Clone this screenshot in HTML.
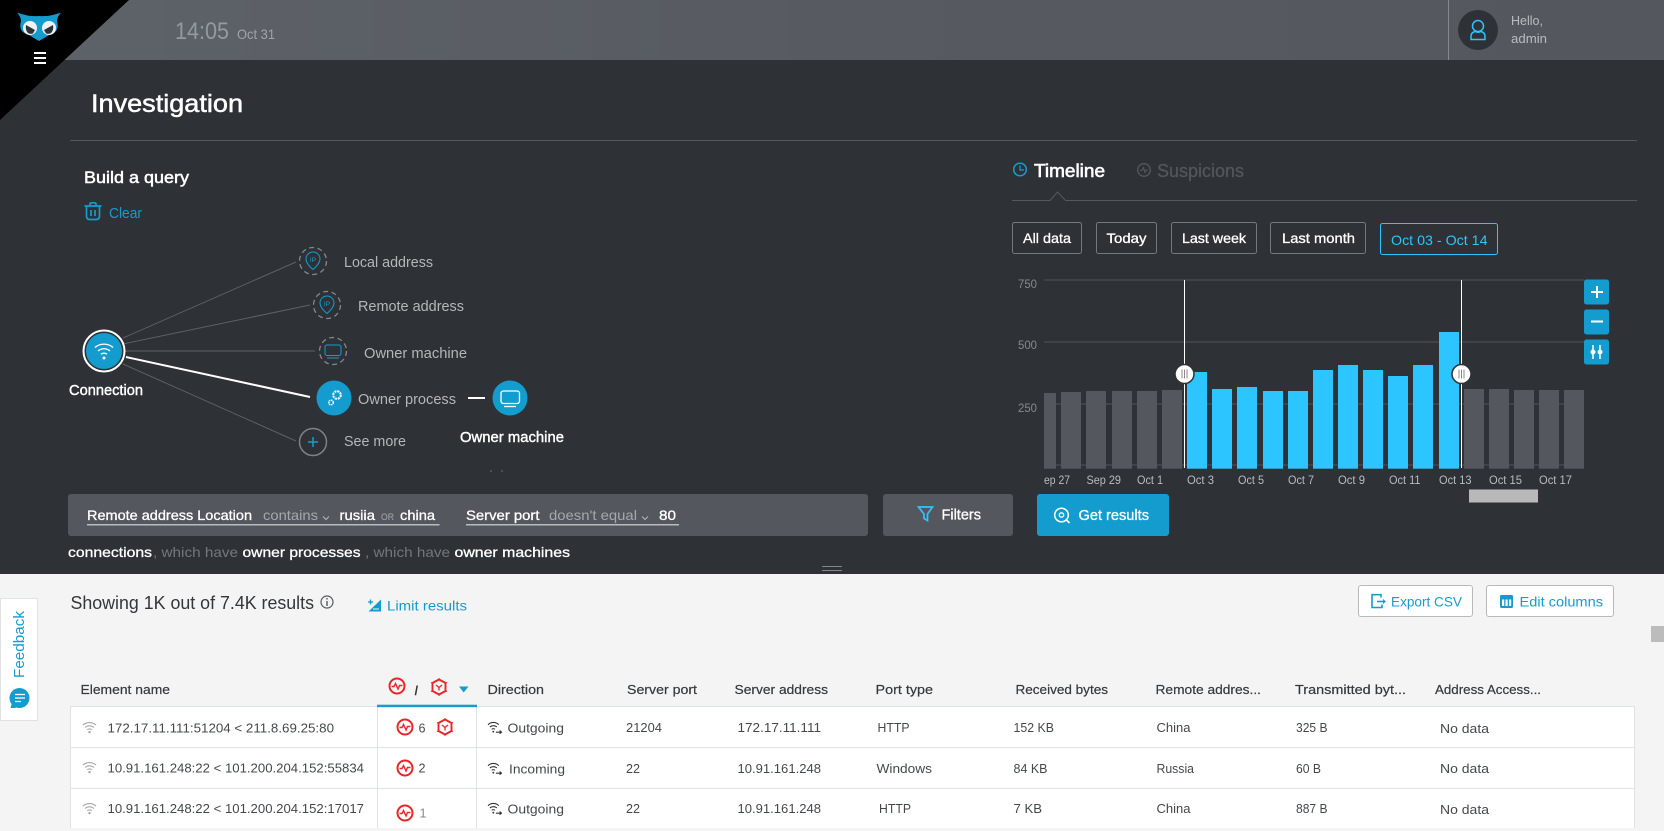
<!DOCTYPE html>
<html><head><meta charset="utf-8"><title>Investigation</title>
<style>
html,body{margin:0;padding:0;width:1664px;height:831px;overflow:hidden;background:#f4f4f4}
svg{display:block}
text{font-family:"Liberation Sans",sans-serif;white-space:pre}
.n{font-size:15px;fill:#b4b6b8}
.w{font-size:15px;fill:#fff;stroke:#fff;stroke-width:.4px}
.b{font-size:14px;fill:#fff;stroke:#fff;stroke-width:.3px}
.g{font-size:14px;fill:#8d9094}
.x{font-size:12px;fill:#b9bbbd}
.y{font-size:12px;fill:#85888c}
.h{font-size:13px;fill:#36393c;stroke:#36393c;stroke-width:.2px}
.r{font-size:13px;fill:#45484b}
.gb{fill:#54585e}
.bb{fill:#2cc5ff}
.gl{fill:#3f4347}
</style></head><body>
<svg xmlns="http://www.w3.org/2000/svg" width="1664" height="831" viewBox="0 0 1664 831">
<defs>
<linearGradient id="hd" x1="0" x2="1" y1="0" y2="0"><stop offset="0" stop-color="#5e6369"/><stop offset=".5" stop-color="#575b61"/><stop offset="1" stop-color="#54585e"/></linearGradient>
<symbol id="pulse" viewBox="0 0 18 18" overflow="visible"><circle cx="9" cy="9" r="7.500" fill="none" stroke="#e8262a" stroke-width="2"/><path d="M3.500 9.500H6L7.500 6.500 10 12 11.500 8.500H14.500" fill="none" stroke="#e8262a" stroke-width="1.400"/></symbol>
<symbol id="hex" viewBox="0 0 18 18" overflow="visible"><path d="M9 1.500L15.500 5V13L9 16.500 2.500 13V5Z" fill="none" stroke="#e8262a" stroke-width="1.900"/><path d="M6 7L9 9.500 12 7M9 9.500V12.500" fill="none" stroke="#e8262a" stroke-width="1.300"/><path d="M9 0V2M9 16V18M1 4.500L3 5.500M17 4.500L15 5.500M1 13.500L3 12.500M17 13.500L15 12.500" stroke="#e8262a" stroke-width="1"/></symbol>
<symbol id="wifi" viewBox="0 0 16 14" overflow="visible"><g fill="none" stroke="#a5a7a9" stroke-width="1.200"><path d="M1 4.500C4.500 .8 11.500 .8 15 4.500"/><path d="M3.300 7C5.800 4.500 10.200 4.500 12.700 7"/><path d="M5.500 9.400C6.900 8.200 9.100 8.200 10.500 9.400"/></g><circle cx="8" cy="12" r="1.300" fill="#a5a7a9"/></symbol>
<symbol id="dir" viewBox="0 0 16 14" overflow="visible"><g fill="none" stroke="#333" stroke-width="1.200"><path d="M.5 4C3.500 .8 9 .8 12 4"/><path d="M2.500 6.500C4.500 4.500 8 4.500 10 6.500"/><path d="M4.500 9C5.500 8 7 8 8 9"/></g><circle cx="6.200" cy="11.500" r="1" fill="#333"/><path d="M9 12H14.500M13 10.300L15 12 13 13.700" fill="none" stroke="#333" stroke-width="1.200"/></symbol>
</defs>

<rect x="0" y="0" width="1664" height="574" fill="#2e3236"/>
<rect x="0" y="0" width="1664" height="60" fill="url(#hd)"/>
<polygon points="0,0 129,0 0,120" fill="#000"/>
<!-- owl -->
<path d="M17 12.500Q29 17 39 16Q49 17 61 12.500Q57 17 57 21Q60 32 50 34.500L39 41 28 34.500Q18 32 21 21Q21 17 17 12.500Z" fill="#159ccf"/>
<ellipse cx="30" cy="28" rx="7" ry="7" fill="#eef2f4"/><ellipse cx="49" cy="28" rx="7" ry="7" fill="#eef2f4"/>
<path d="M26 25L35 30 33 33.500Q30 34.500 28 33 25 30 26 25Z" fill="#2e3236"/><path d="M53 25L44 30 46 33.500Q49 34.500 51 33 54 30 53 25Z" fill="#2e3236"/>
<path d="M34 53H46M34 58H46M34 63H46" stroke="#fff" stroke-width="2"/>
<!-- header -->
<text x="175" y="39" font-size="24" fill="#929aa0" textLength="54" lengthAdjust="spacingAndGlyphs">14:05</text>
<text x="237" y="39" font-size="14" fill="#9ea5aa" textLength="38" lengthAdjust="spacingAndGlyphs">Oct 31</text>
<rect x="1448" y="0" width="1" height="60" fill="#85888d"/>
<circle cx="1478" cy="30" r="20" fill="#2e3236"/>
<circle cx="1478" cy="26" r="5.500" fill="none" stroke="#2cc5ff" stroke-width="1.500"/>
<path d="M1471 39.500V36.500Q1471 32.500 1475 31.500Q1478 33 1481 31.500Q1485 32.500 1485 36.500V39.500Z" fill="none" stroke="#2cc5ff" stroke-width="1.500"/>
<text x="1511" y="25" font-size="13" fill="#b9bcbe" textLength="32" lengthAdjust="spacingAndGlyphs">Hello,</text>
<text x="1511" y="43" font-size="13" fill="#b9bcbe" textLength="36" lengthAdjust="spacingAndGlyphs">admin</text>

<text x="91" y="112" font-size="25" fill="#fff" stroke="#fff" stroke-width=".5" textLength="152" lengthAdjust="spacingAndGlyphs">Investigation</text>
<rect x="70" y="140" width="1567" height="1" fill="#55595e"/>

<!-- query -->
<text x="84" y="183" font-size="17" fill="#fff" stroke="#fff" stroke-width=".5" textLength="105" lengthAdjust="spacingAndGlyphs">Build a query</text>
<g fill="none" stroke="#159ccf" stroke-width="1.700"><path d="M84.500 206H101.500M90 206V204Q90 202.800 91.500 202.800H94.500Q96 202.800 96 204V206M86.500 206V216Q86.500 219.500 90 219.500H96Q99.500 219.500 99.500 216V206"/><path d="M91 210V216M95 210V216"/></g>
<text x="109" y="218" font-size="15" fill="#159ccf" textLength="33" lengthAdjust="spacingAndGlyphs">Clear</text>

<!-- graph -->
<g stroke="#5d6064" stroke-width="1"><path d="M123 338L296 262"/><path d="M123 344L310 305"/><path d="M125 351H315"/><path d="M123 364L296 441"/></g>
<path d="M126 357L310 397" stroke="#fff" stroke-width="2"/>
<circle cx="104" cy="351" r="20.500" fill="#2e3236" stroke="#fff" stroke-width="2"/>
<circle cx="104" cy="351" r="18" fill="#159ccf"/>
<g fill="none" stroke="#fff" stroke-width="1.300"><path d="M95 347.500C100 343 108 343 113 347.500"/><path d="M98 351C101.500 348 106.500 348 110 351"/><path d="M101 354.200C102.800 353 105.200 353 107 354.200"/></g><circle cx="104" cy="358" r="1.500" fill="#fff"/>
<text x="69" y="395" class="w" textLength="74" lengthAdjust="spacingAndGlyphs">Connection</text>

<g fill="none" stroke="#85888b" stroke-width="1.300" stroke-dasharray="5 3.500"><circle cx="313" cy="261" r="13.500"/><circle cx="327" cy="305" r="13.500"/><circle cx="333" cy="351" r="13.500"/></g>
<g fill="none" stroke="#159ccf" stroke-width="1"><path d="M313 269.500Q306 263.500 306 259A7 7 0 0 1 320 259Q320 263.500 313 269.500Z"/><path d="M327 313.500Q320 307.500 320 303A7 7 0 0 1 334 303Q334 307.500 327 313.500Z"/><rect x="325" y="345" width="16" height="10.500" rx="2"/><path d="M327 358H339"/></g>
<text x="313" y="262" font-size="6.500" fill="#159ccf" text-anchor="middle">IP</text>
<text x="327" y="306" font-size="6.500" fill="#159ccf" text-anchor="middle">IP</text>
<text x="344" y="267" class="n" textLength="89" lengthAdjust="spacingAndGlyphs">Local address</text>
<text x="358" y="311" class="n" textLength="106" lengthAdjust="spacingAndGlyphs">Remote address</text>
<text x="364" y="358" class="n" textLength="103" lengthAdjust="spacingAndGlyphs">Owner machine</text>
<circle cx="334" cy="398" r="17.500" fill="#159ccf"/>
<g fill="none" stroke="#fff"><circle cx="337" cy="395" r="3.800" stroke-dasharray="2.200 .8" stroke-width="2"/><circle cx="331" cy="402.500" r="2.300" stroke-dasharray="1.500 .6" stroke-width="1.500"/></g>
<text x="358" y="404" class="n" textLength="98" lengthAdjust="spacingAndGlyphs">Owner process</text>
<rect x="468" y="397" width="17" height="2" fill="#fff"/>
<circle cx="510" cy="398" r="17.500" fill="#159ccf"/>
<rect x="501" y="391" width="18.500" height="12.500" rx="2.500" fill="none" stroke="#fff" stroke-width="1.300"/><path d="M504 406.500H516" stroke="#fff" stroke-width="1.300"/>
<text x="460" y="442" class="w" textLength="104" lengthAdjust="spacingAndGlyphs">Owner machine</text>
<circle cx="313" cy="442" r="13.500" fill="none" stroke="#7f8285" stroke-width="1.500"/>
<path d="M308 442H318M313 437V447" stroke="#159ccf" stroke-width="1.500"/>
<text x="344" y="446" class="n" textLength="62" lengthAdjust="spacingAndGlyphs">See more</text>
<circle cx="491" cy="471" r=".6" fill="#999"/><circle cx="502" cy="471" r=".6" fill="#999"/>

<!-- query bar -->
<rect x="68" y="494" width="800" height="42" rx="3" fill="#54585e"/>
<text x="87" y="520" class="b" textLength="165" lengthAdjust="spacingAndGlyphs">Remote address Location</text>
<text x="263" y="520" class="g" textLength="55" lengthAdjust="spacingAndGlyphs" style="fill:#a5a8ab">contains</text>
<path d="M323 516.500L326 519.500 329 516.500" fill="none" stroke="#b5b7b9" stroke-width="1"/>
<text x="339.500" y="520" class="b" textLength="35.500" lengthAdjust="spacingAndGlyphs">rusiia</text>
<text x="381" y="520" font-size="9.500" fill="#a5a8ab" textLength="13" lengthAdjust="spacingAndGlyphs">OR</text>
<text x="400" y="520" class="b" textLength="35" lengthAdjust="spacingAndGlyphs">china</text>
<rect x="87" y="524" width="352.500" height="1.500" fill="#b9bbbd"/>
<text x="466" y="520" class="b" textLength="73.500" lengthAdjust="spacingAndGlyphs">Server port</text>
<text x="549" y="520" class="g" textLength="88" lengthAdjust="spacingAndGlyphs" style="fill:#a5a8ab">doesn't equal</text>
<path d="M642 516.500L645 519.500 648 516.500" fill="none" stroke="#b5b7b9" stroke-width="1"/>
<text x="659" y="520" class="b" textLength="17" lengthAdjust="spacingAndGlyphs">80</text>
<rect x="466" y="524" width="213" height="1.500" fill="#b9bbbd"/>
<text x="68" y="557" class="b" textLength="84" lengthAdjust="spacingAndGlyphs">connections</text>
<text x="153" y="557" class="g" style="fill:#74777b" textLength="85" lengthAdjust="spacingAndGlyphs">, which have</text>
<text x="242.500" y="557" class="b" textLength="118" lengthAdjust="spacingAndGlyphs">owner processes</text>
<text x="365" y="557" class="g" style="fill:#74777b" textLength="85" lengthAdjust="spacingAndGlyphs">, which have</text>
<text x="454.500" y="557" class="b" textLength="115.500" lengthAdjust="spacingAndGlyphs">owner machines</text>

<!-- filters/get -->
<rect x="883" y="494" width="130" height="42" rx="3" fill="#54585e"/>
<path d="M918.500 507H932.500L927.500 514V520.500L924 518.500V514Z" fill="none" stroke="#2cc5ff" stroke-width="1.700"/>
<text x="941.500" y="519.500" class="b" style="font-size:15px" textLength="39.500" lengthAdjust="spacingAndGlyphs">Filters</text>
<rect x="1037" y="494" width="132" height="42" rx="3" fill="#159ccf"/>
<circle cx="1061.500" cy="515" r="6.800" fill="none" stroke="#fff" stroke-width="1.500"/><circle cx="1061.500" cy="515" r="2.200" fill="none" stroke="#fff" stroke-width="1.300"/><path d="M1066.500 520L1069.500 523" stroke="#fff" stroke-width="1.600"/>
<text x="1078.500" y="520" class="b" style="font-size:15px" textLength="70.500" lengthAdjust="spacingAndGlyphs">Get results</text>

<!-- tabs -->
<circle cx="1020" cy="169.500" r="6.300" fill="none" stroke="#159ccf" stroke-width="1.500"/><path d="M1020 165.500V170H1024" fill="none" stroke="#159ccf" stroke-width="1.200"/>
<text x="1034" y="177" font-size="18" fill="#fff" stroke="#fff" stroke-width=".6" textLength="71" lengthAdjust="spacingAndGlyphs">Timeline</text>
<circle cx="1144" cy="170" r="6.300" fill="none" stroke="#565a5f" stroke-width="1.300"/><path d="M1140 170.500H1142L1143.500 167.500 1145 172.500 1146 170H1148" fill="none" stroke="#565a5f" stroke-width="1"/>
<text x="1157" y="177" font-size="18" fill="#53575c" stroke="#53575c" stroke-width=".3" textLength="87" lengthAdjust="spacingAndGlyphs">Suspicions</text>
<path d="M1012 200.500H1050L1057.500 192 1065.500 200.500H1637" fill="none" stroke="#55595e" stroke-width="1"/>

<g fill="#2e3236" stroke="#75787c" stroke-width="1"><rect x="1012.500" y="222.500" width="69" height="31" rx="2"/><rect x="1096.500" y="222.500" width="60" height="31" rx="2"/><rect x="1171.500" y="222.500" width="85" height="31" rx="2"/><rect x="1270.500" y="222.500" width="95" height="31" rx="2"/></g>
<rect x="1380.500" y="223.500" width="117" height="31" rx="2" fill="#2e3236" stroke="#2cc5ff"/>
<text x="1023" y="243" class="b" textLength="48" lengthAdjust="spacingAndGlyphs">All data</text><text x="1106.500" y="243" class="b" textLength="40" lengthAdjust="spacingAndGlyphs">Today</text><text x="1182" y="243" class="b" textLength="64" lengthAdjust="spacingAndGlyphs">Last week</text><text x="1282" y="243" class="b" textLength="73" lengthAdjust="spacingAndGlyphs">Last month</text>
<text x="1391" y="245" font-size="14" fill="#2cc5ff" textLength="96.500" lengthAdjust="spacingAndGlyphs">Oct 03 - Oct 14</text>

<!-- chart -->
<rect class="gl" x="1044" y="279" width="540" height="2"/><rect class="gl" x="1044" y="341" width="540" height="2"/><rect class="gl" x="1044" y="403" width="540" height="2"/><rect class="gl" x="1044" y="464" width="540" height="2"/>
<text x="1018" y="288" class="y" textLength="19" lengthAdjust="spacingAndGlyphs">750</text>
<text x="1018" y="349" class="y" textLength="19" lengthAdjust="spacingAndGlyphs">500</text>
<text x="1018" y="412" class="y" textLength="19" lengthAdjust="spacingAndGlyphs">250</text>
<rect class="gb" x="1044" y="393" width="12" height="75.700"/>
<rect class="gb" x="1061" y="392" width="20" height="76.700"/>
<rect class="gb" x="1086" y="391" width="20" height="77.700"/>
<rect class="gb" x="1112" y="391" width="20" height="77.700"/>
<rect class="gb" x="1137" y="391" width="20" height="77.700"/>
<rect class="gb" x="1162" y="390" width="20" height="78.700"/>
<rect class="gb" x="1464" y="389" width="20" height="79.700"/>
<rect class="gb" x="1489" y="389" width="20" height="79.700"/>
<rect class="gb" x="1514" y="390" width="20" height="78.700"/>
<rect class="gb" x="1539" y="390" width="20" height="78.700"/>
<rect class="gb" x="1564" y="390" width="20" height="78.700"/>
<rect class="bb" x="1187" y="372" width="20" height="96.700"/>
<rect class="bb" x="1212" y="389" width="20" height="79.700"/>
<rect class="bb" x="1237" y="387" width="20" height="81.700"/>
<rect class="bb" x="1263" y="391" width="20" height="77.700"/>
<rect class="bb" x="1288" y="391" width="20" height="77.700"/>
<rect class="bb" x="1313" y="370" width="20" height="98.700"/>
<rect class="bb" x="1338" y="365" width="20" height="103.700"/>
<rect class="bb" x="1363" y="370" width="20" height="98.700"/>
<rect class="bb" x="1388" y="376" width="20" height="92.700"/>
<rect class="bb" x="1413" y="365" width="20" height="103.700"/>
<rect class="bb" x="1439" y="332" width="20" height="136.700"/>
<rect x="1184" y="280" width="1" height="188" fill="#fff"/><rect x="1461" y="280" width="1" height="188" fill="#fff"/>
<circle cx="1184.500" cy="374" r="9.500" fill="#fff" stroke="#2e3236" stroke-width="1.500"/><circle cx="1461.500" cy="374" r="9.500" fill="#fff" stroke="#2e3236" stroke-width="1.500"/>
<path d="M1182 369.500V378.500M1184.500 369.500V378.500M1187 369.500V378.500M1459 369.500V378.500M1461.500 369.500V378.500M1464 369.500V378.500" stroke="#888" stroke-width="1"/>
<text x="1044" y="484" class="x" textLength="26" lengthAdjust="spacingAndGlyphs">ep 27</text>
<text x="1086.500" y="484" class="x" textLength="34.500" lengthAdjust="spacingAndGlyphs">Sep 29</text>
<text x="1137" y="484" class="x" textLength="26" lengthAdjust="spacingAndGlyphs">Oct 1</text>
<text x="1187" y="484" class="x" textLength="27" lengthAdjust="spacingAndGlyphs">Oct 3</text>
<text x="1238" y="484" class="x" textLength="26" lengthAdjust="spacingAndGlyphs">Oct 5</text>
<text x="1288" y="484" class="x" textLength="26" lengthAdjust="spacingAndGlyphs">Oct 7</text>
<text x="1338" y="484" class="x" textLength="27" lengthAdjust="spacingAndGlyphs">Oct 9</text>
<text x="1389" y="484" class="x" textLength="31.500" lengthAdjust="spacingAndGlyphs">Oct 11</text>
<text x="1439" y="484" class="x" textLength="32.500" lengthAdjust="spacingAndGlyphs">Oct 13</text>
<text x="1489" y="484" class="x" textLength="33" lengthAdjust="spacingAndGlyphs">Oct 15</text>
<text x="1539" y="484" class="x" textLength="33" lengthAdjust="spacingAndGlyphs">Oct 17</text>
<rect x="1469" y="489.500" width="69" height="13" fill="#b9b9b9"/>
<rect x="1584" y="279.500" width="25" height="25" rx="2.500" fill="#159ccf"/><rect x="1584" y="309.500" width="25" height="25" rx="2.500" fill="#159ccf"/><rect x="1584" y="339.500" width="25" height="25" rx="2.500" fill="#159ccf"/>
<path d="M1591 292H1603M1597 286V298M1591 321.500H1603" stroke="#fff" stroke-width="2"/>
<path d="M1593 345V359M1600 345V359" stroke="#fff" stroke-width="1.500"/><circle cx="1593" cy="352" r="2.500" fill="#fff"/><circle cx="1600" cy="352" r="2.500" fill="#fff"/>
<rect x="822" y="566" width="20" height="1" fill="#85888b"/><rect x="822" y="570" width="20" height="1" fill="#85888b"/>

<!-- lower -->
<rect x="0" y="574" width="1664" height="257" fill="#f4f4f4"/>
<text x="70.500" y="609" font-size="18" fill="#34373a" textLength="243.500" lengthAdjust="spacingAndGlyphs">Showing 1K out of 7.4K results</text>
<circle cx="327" cy="602" r="6" fill="none" stroke="#55585b" stroke-width="1.200"/><path d="M327 601V606M327 598V599.500" stroke="#55585b" stroke-width="1.400"/>
<path d="M381 599.500V611.500H368.500Z" fill="#159ccf"/><path d="M368 602H373M370.500 599.500V604.500" stroke="#159ccf" stroke-width="1.300"/><path d="M373 609H379" stroke="#f4f4f4" stroke-width="1"/>
<text x="387" y="610.500" font-size="14" fill="#159ccf" textLength="80" lengthAdjust="spacingAndGlyphs">Limit results</text>
<rect x="1358.500" y="585.500" width="114" height="31" rx="2.500" fill="#fff" stroke="#b9b9b9"/>
<rect x="1486.500" y="585.500" width="127" height="31" rx="2.500" fill="#fff" stroke="#b9b9b9"/>
<path d="M1381 597.500V594.700H1375.500L1372 594.700V607.500H1382V604.500" fill="none" stroke="#159ccf" stroke-width="1.600"/><path d="M1377 601.500H1384" fill="none" stroke="#159ccf" stroke-width="1.600"/><path d="M1383 599L1386 601.500 1383 604Z" fill="#159ccf"/>
<text x="1391" y="606.500" font-size="14" fill="#159ccf" textLength="71" lengthAdjust="spacingAndGlyphs">Export CSV</text>
<rect x="1500" y="595" width="13" height="13" rx="1.500" fill="#159ccf"/><path d="M1502 599.500H1504.200V606H1502ZM1505.500 599.500H1507.700V606H1505.500ZM1509 599.500H1511.200V606H1509Z" fill="#fff"/>
<text x="1519.500" y="606.500" font-size="14" fill="#159ccf" textLength="83.500" lengthAdjust="spacingAndGlyphs">Edit columns</text>
<rect x="1651" y="626" width="13" height="16" fill="#bcbcbc"/>

<!-- feedback -->
<rect x="0.500" y="598.500" width="37" height="122" fill="#fff" stroke="#dfe3e6"/>
<text transform="translate(24 678) rotate(-90)" font-size="15" fill="#159ccf" textLength="67" lengthAdjust="spacingAndGlyphs">Feedback</text>
<circle cx="19.500" cy="698" r="10" fill="#159ccf"/><path d="M10.500 708H16L12 703Z" fill="#159ccf"/><path d="M15 694.500H25M15 698H25M15 701.500H21" stroke="#fff" stroke-width="1.300"/>

<!-- table -->
<rect x="70.500" y="706" width="1563.500" height="122" fill="#fff"/>
<g fill="#e0e3e5"><rect x="70" y="706" width="1565" height="1"/><rect x="70" y="747" width="1565" height="1"/><rect x="70" y="788" width="1565" height="1"/><rect x="70" y="706" width="1" height="122"/><rect x="377" y="706" width="1" height="122"/><rect x="476" y="706" width="1" height="122"/><rect x="1634" y="706" width="1" height="122"/></g>
<rect x="377" y="704.700" width="100" height="2.500" fill="#159ccf"/>
<text x="80.500" y="694" class="h" textLength="89.500" lengthAdjust="spacingAndGlyphs">Element name</text>
<use href="#pulse" x="388" y="677" width="18" height="18"/>
<text x="414.500" y="695" font-size="13" fill="#333" font-weight="bold">/</text>
<use href="#hex" x="430" y="678" width="18" height="18"/>
<path d="M459 686.500H468.500L463.700 692.500Z" fill="#159ccf"/>
<text x="487.500" y="694" class="h" textLength="56.500" lengthAdjust="spacingAndGlyphs">Direction</text>
<text x="627" y="694" class="h" textLength="70" lengthAdjust="spacingAndGlyphs">Server port</text>
<text x="734.500" y="694" class="h" textLength="93.500" lengthAdjust="spacingAndGlyphs">Server address</text>
<text x="875.500" y="694" class="h" textLength="57.500" lengthAdjust="spacingAndGlyphs">Port type</text>
<text x="1015.500" y="694" class="h" textLength="92.500" lengthAdjust="spacingAndGlyphs">Received bytes</text>
<text x="1155.500" y="694" class="h" textLength="105.500" lengthAdjust="spacingAndGlyphs">Remote addres...</text>
<text x="1295" y="694" class="h" textLength="111" lengthAdjust="spacingAndGlyphs">Transmitted byt...</text>
<text x="1435" y="694" class="h" textLength="106" lengthAdjust="spacingAndGlyphs">Address Access...</text>

<use href="#wifi" x="82" y="721" width="15" height="13"/>
<text x="107.500" y="732.500" class="r" textLength="226.500" lengthAdjust="spacingAndGlyphs">172.17.11.111:51204 &lt; 211.8.69.25:80</text>
<use href="#pulse" x="396" y="718" width="18" height="18"/>
<text x="418.500" y="732.500" class="r" textLength="7" lengthAdjust="spacingAndGlyphs">6</text>
<use href="#hex" x="436" y="718" width="18" height="18"/>
<use href="#dir" x="487.500" y="721" width="15" height="13"/>
<text x="507.500" y="732.500" class="r" textLength="56.500" lengthAdjust="spacingAndGlyphs">Outgoing</text>
<text x="626" y="732" class="r" textLength="36" lengthAdjust="spacingAndGlyphs">21204</text>
<text x="737.500" y="732" class="r" textLength="83.500" lengthAdjust="spacingAndGlyphs">172.17.11.111</text>
<text x="877.500" y="732" class="r" textLength="32" lengthAdjust="spacingAndGlyphs">HTTP</text>
<text x="1013.500" y="732" class="r" textLength="40.500" lengthAdjust="spacingAndGlyphs">152 KB</text>
<text x="1156.500" y="732" class="r" textLength="34" lengthAdjust="spacingAndGlyphs">China</text>
<text x="1296" y="732" class="r" textLength="31.500" lengthAdjust="spacingAndGlyphs">325 B</text>
<text x="1440" y="733" class="r" textLength="49" lengthAdjust="spacingAndGlyphs">No data</text>

<use href="#wifi" x="82" y="761" width="15" height="13"/>
<text x="107.500" y="772.500" class="r" textLength="256.500" lengthAdjust="spacingAndGlyphs">10.91.161.248:22 &lt; 101.200.204.152:55834</text>
<use href="#pulse" x="396" y="759" width="18" height="18"/>
<text x="418.500" y="772.500" class="r" textLength="7" lengthAdjust="spacingAndGlyphs">2</text>
<use href="#dir" x="487.500" y="762" width="15" height="13"/>
<text x="509" y="773.500" class="r" textLength="56" lengthAdjust="spacingAndGlyphs">Incoming</text>
<text x="626" y="773" class="r" textLength="14" lengthAdjust="spacingAndGlyphs">22</text>
<text x="737.500" y="773" class="r" textLength="83.500" lengthAdjust="spacingAndGlyphs">10.91.161.248</text>
<text x="876.500" y="773" class="r" textLength="55.500" lengthAdjust="spacingAndGlyphs">Windows</text>
<text x="1013.500" y="773" class="r" textLength="34" lengthAdjust="spacingAndGlyphs">84 KB</text>
<text x="1156.500" y="773" class="r" textLength="37.500" lengthAdjust="spacingAndGlyphs">Russia</text>
<text x="1296" y="773" class="r" textLength="25" lengthAdjust="spacingAndGlyphs">60 B</text>
<text x="1440" y="773" class="r" textLength="49" lengthAdjust="spacingAndGlyphs">No data</text>

<use href="#wifi" x="82" y="802" width="15" height="13"/>
<text x="107.500" y="813" class="r" textLength="256.500" lengthAdjust="spacingAndGlyphs">10.91.161.248:22 &lt; 101.200.204.152:17017</text>
<use href="#pulse" x="396" y="804" width="18" height="18"/>
<text x="419.500" y="817.500" class="r" style="fill:#888" textLength="7" lengthAdjust="spacingAndGlyphs">1</text>
<use href="#dir" x="487.500" y="802" width="15" height="13"/>
<text x="507.500" y="813.500" class="r" textLength="56.500" lengthAdjust="spacingAndGlyphs">Outgoing</text>
<text x="626" y="813" class="r" textLength="14" lengthAdjust="spacingAndGlyphs">22</text>
<text x="737.500" y="813" class="r" textLength="83.500" lengthAdjust="spacingAndGlyphs">10.91.161.248</text>
<text x="879" y="813" class="r" textLength="32" lengthAdjust="spacingAndGlyphs">HTTP</text>
<text x="1013.500" y="813" class="r" textLength="28.500" lengthAdjust="spacingAndGlyphs">7 KB</text>
<text x="1156.500" y="813" class="r" textLength="34" lengthAdjust="spacingAndGlyphs">China</text>
<text x="1296" y="813" class="r" textLength="31.500" lengthAdjust="spacingAndGlyphs">887 B</text>
<text x="1440" y="814" class="r" textLength="49" lengthAdjust="spacingAndGlyphs">No data</text>
</svg>
</body></html>
